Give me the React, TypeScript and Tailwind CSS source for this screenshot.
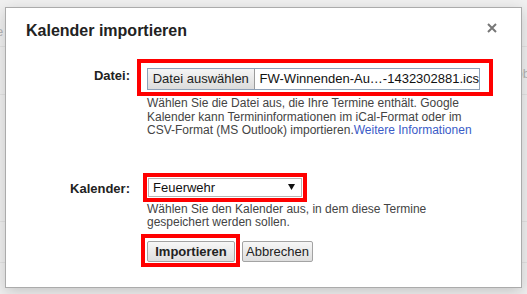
import React from 'react';

function PageBehind() {
  return (
    <div className="flex flex-col text-[13px] text-[#b5b5b5]">
      <div className="h-[47px] border-b border-[#e3e3e3] flex items-start pt-[22px]">
        <span className="-ml-[4px]">e</span>
      </div>
      <div className="h-[48px] border-b border-[#e3e3e3] flex justify-end items-start pt-[17px]">
        <span className="-mr-[3px]">ob</span>
      </div>
      <div className="h-[127px] border-b border-[#e3e3e3]" />
      <div className="h-[41px] border-b border-[#e3e3e3]" />
    </div>
  );
}

function GrayButton({ children, bold = false }: { children: React.ReactNode; bold?: boolean }) {
  return (
    <button
      className={`h-[21px] px-[3px] border border-[#a3a3a3] rounded-[2px] bg-gradient-to-b from-[#f7f7f7] to-[#dedede] text-[13px] leading-[19px] text-[#222] ${
        bold ? 'font-bold w-[88px]' : ''
      }`}
    >
      {children}
    </button>
  );
}

export default function App() {
  return (
    <div className="relative w-[527px] h-[294px] overflow-hidden bg-[#f0f0f0] font-['Liberation_Sans',Arial,sans-serif]">
      <PageBehind />

      {/* Import dialog */}
      <div className="absolute left-[5px] top-[7px] w-[517px] h-[281px] bg-white border border-[#ababab] shadow-[0_4px_14px_rgba(0,0,0,0.18)]">
        <div className="flex justify-between items-start pt-[14px] pl-[20px] pr-[24px]">
          <h1 className="text-[16px] leading-[18px] font-bold text-[#222]">Kalender importieren</h1>
          <svg width="10" height="10" viewBox="0 0 10 10" className="mt-[1px]">
            <path d="M1 1 L9 9 M9 1 L1 9" stroke="#777" strokeWidth="2" />
          </svg>
        </div>

        {/* Datei row */}
        <div className="flex mt-[19px]">
          <div className="w-[124px] text-right pt-[9px] text-[13px] leading-[16px] font-bold text-[#222]">Datei:</div>
          <div className="ml-[17px] flex flex-col">
            <div className="-ml-[10px] w-fit border-4 border-[#ff0000] pt-[5px] pb-[2px] pl-[6px] pr-[9px]">
              <div className="flex w-[333px] h-[22px] border border-[#8ea1b9] bg-white">
                <div className="w-[111px] h-full border-r border-[#9c9c9c] bg-gradient-to-b from-[#f5f5f5] to-[#dcdcdc] text-[13px] leading-[20px] text-[#222] text-center">
                  Datei auswählen
                </div>
                <div className="pl-[5px] text-[13px] leading-[20px] text-[#111] whitespace-nowrap">
                  FW-Winnenden-Au…-1432302881.ics
                </div>
              </div>
            </div>
            <p className="w-[332px] mt-[1px] text-[12px] leading-[13.5px] text-[#444]">
              Wählen Sie die Datei aus, die Ihre Termine enthält. Google Kalender kann Termininformationen im
              iCal-Format oder im CSV-Format (MS Outlook) importieren.
              <span className="text-[#3a5bc7]">Weitere Informationen</span>
            </p>
          </div>
        </div>

        {/* Kalender row */}
        <div className="flex mt-[35px]">
          <div className="w-[124px] text-right pt-[8px] text-[13px] leading-[16px] font-bold text-[#222]">Kalender:</div>
          <div className="ml-[17px] flex flex-col">
            <div className="-ml-[4px] w-fit border-4 border-[#ff0000] p-[1px]">
              <div className="flex items-center justify-between w-[154px] h-[19px] border border-[#b5b5b5] bg-white pl-[4px] pr-[6px]">
                <span className="text-[13px] leading-[17px] text-[#111]">Feuerwehr</span>
                <svg width="7" height="6" viewBox="0 0 7 6">
                  <path d="M0 0 L7 0 L3.5 6 Z" fill="#111" />
                </svg>
              </div>
            </div>
            <p className="w-[332px] mt-[1px] text-[12px] leading-[13.5px] text-[#444]">
              Wählen Sie den Kalender aus, in dem diese Termine gespeichert werden sollen.
            </p>
            <div className="flex items-start mt-[4px]">
              <div className="-ml-[6px] border-4 border-[#ff0000] pl-[2px] pt-[1px] pr-[1px]">
                <GrayButton bold>Importieren</GrayButton>
              </div>
              <div className="ml-[2px] mt-[5px]">
                <GrayButton>Abbrechen</GrayButton>
              </div>
            </div>
          </div>
        </div>
      </div>
    </div>
  );
}
